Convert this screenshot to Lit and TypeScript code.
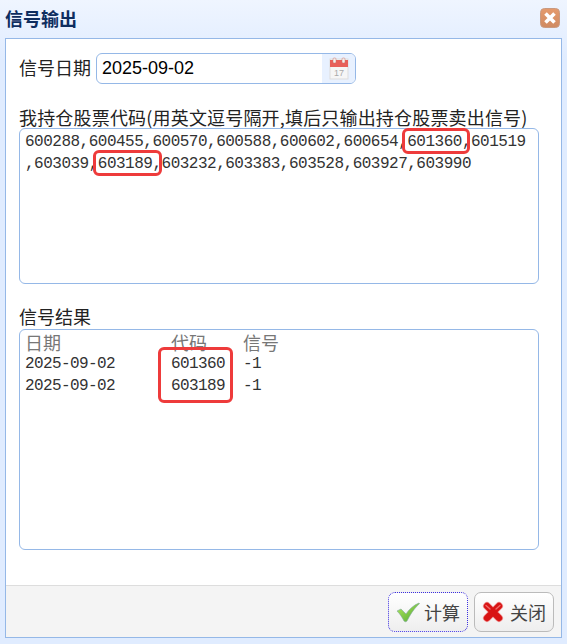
import { LitElement, html, css } from "lit";
import { customElement } from "lit/decorators.js";

const rows = [
  { date: "2025-09-02", code: "601360", signal: "-1" },
  { date: "2025-09-02", code: "603189", signal: "-1" },
];

@customElement("app-root")
export class AppRoot extends LitElement {
  static styles = css`
    :host {
      display: block;
      width: 567px;
      height: 644px;
      font-family: "Noto Sans CJK SC", "Liberation Sans", sans-serif;
      color: #222;
    }
    .window {
      box-sizing: border-box;
      height: 644px;
      display: flex;
      flex-direction: column;
      padding: 0 5px 6px;
      background: linear-gradient(#eff5ff 0, #e0ecff 60px);
    }
    .head {
      height: 38px;
      flex: none;
      display: flex;
      align-items: center;
      justify-content: space-between;
      padding-bottom: 3px;
      box-sizing: border-box;
    }
    .title {
      font-size: 18px;
      font-weight: 700;
      color: #0e2d5f;
      line-height: 24px;
    }
    .close {
      width: 20px;
      height: 20px;
      margin-right: 2px;
      display: block;
    }
    .panel {
      flex: 1;
      min-height: 0;
      display: flex;
      flex-direction: column;
      background: #fff;
      border: 1px solid #95b8e7;
    }
    .content {
      flex: 1;
      padding: 14px 22px 0 13px;
    }
    .date-row {
      display: flex;
      align-items: center;
      gap: 5px;
      height: 31px;
    }
    .label {
      font-size: 18px;
      line-height: 26px;
      color: #222;
      white-space: nowrap;
    }
    .date-row .label {
      padding-bottom: 4px;
    }
    .date-box {
      box-sizing: border-box;
      width: 260px;
      height: 31px;
      display: flex;
      border: 1px solid #95b8e7;
      border-radius: 6px;
      overflow: hidden;
    }
    .date-value {
      flex: 1;
      padding-left: 5px;
      font: 18px/29px "Liberation Sans", sans-serif;
      color: #000;
    }
    .date-btn {
      width: 33px;
      display: flex;
      align-items: center;
      justify-content: center;
      background: #e8f1ff;
    }
    .field-label {
      margin-top: 18px;
      height: 26px;
      line-height: 30px;
      letter-spacing: 0.18px;
    }
    .area {
      position: relative;
      box-sizing: border-box;
      border: 1px solid #95b8e7;
      border-radius: 6px;
      padding: 1px 5px;
      font: 16px/22px "Liberation Mono", monospace;
      letter-spacing: -0.6px;
      color: #333;
      background: #fff;
    }
    .codes {
      height: 156px;
      padding-top: 2px;
      letter-spacing: -0.5px;
      white-space: pre;
    }
    .result-label {
      margin-top: 20px;
      height: 25px;
      line-height: 24px;
    }
    .result {
      height: 221px;
      padding-top: 0;
    }
    .grid {
      display: grid;
      grid-template-columns: 146px 72px auto;
      justify-content: start;
      grid-template-rows: 23px 22px 22px;
      align-items: end;
    }
    .th {
      font: 18px/22px "Noto Sans CJK SC", sans-serif;
      letter-spacing: 0;
      color: #777;
    }
    .mark {
      position: absolute;
      box-sizing: border-box;
      border: 3px solid #ee3b3b;
      border-radius: 6px;
    }
    .foot {
      flex: none;
      height: 52px;
      box-sizing: border-box;
      display: flex;
      justify-content: flex-end;
      align-items: center;
      gap: 6px;
      padding: 0 7px 0 0;
      background: #f4f4f4;
      border-top: 1px solid #ddd;
    }
    .btn {
      box-sizing: border-box;
      width: 80px;
      height: 40px;
      display: flex;
      align-items: center;
      justify-content: center;
      gap: 6px;
      border: 1px solid #bbb;
      border-radius: 7px;
      background: linear-gradient(#fff, #eee);
      font: 18px/24px "Noto Sans CJK SC", sans-serif;
      color: #444;
      padding: 0;
    }
    .btn.focus {
      gap: 4px;
      border: 1px dotted #3c2fe0;
    }
  `;

  render() {
    return html`
      <div class="window">
        <div class="head">
          <span class="title">信号输出</span>
          <svg class="close" viewBox="0 0 20 20">
            <defs>
              <linearGradient id="cl" x1="0" y1="0" x2="0" y2="1">
                <stop offset="0" stop-color="#e59a6c" />
                <stop offset="1" stop-color="#cf8a62" />
              </linearGradient>
            </defs>
            <rect x="0.5" y="0.5" width="19" height="19" rx="4" fill="url(#cl)" stroke="#c99a80" />
            <path d="M5.5 5.5 14.5 14.5M14.5 5.5 5.5 14.5" stroke="#fff" stroke-width="3.6" />
          </svg>
        </div>
        <div class="panel">
          <div class="content">
            <div class="date-row">
              <span class="label">信号日期</span>
              <div class="date-box">
                <div class="date-value">2025-09-02</div>
                <div class="date-btn">
                  <svg width="20" height="23" viewBox="0 0 20 23">
                    <rect x="1" y="2" width="18" height="20" fill="#f6f6f6" stroke="#ddd" />
                    <rect x="1" y="3" width="18" height="7" fill="#e8605a" />
                    <rect x="4" y="1" width="3" height="5" rx="1" fill="#f3f0ec" stroke="#c9716a" stroke-width="0.5" />
                    <rect x="13" y="1" width="3" height="5" rx="1" fill="#f3f0ec" stroke="#c9716a" stroke-width="0.5" />
                    <text x="10" y="19" font-size="9" text-anchor="middle" fill="#aaa" font-family="Liberation Sans">17</text>
                  </svg>
                </div>
              </div>
            </div>
            <div class="label field-label">我持仓股票代码(用英文逗号隔开,填后只输出持仓股票卖出信号)</div>
            <div class="area codes">600288,600455,600570,600588,600602,600654,601360,601519
,603039,603189,603232,603383,603528,603927,603990<span class="mark" style="left:382px;top:-1px;width:68px;height:26px"></span><span class="mark" style="left:73px;top:21px;width:69px;height:26px"></span></div>
            <div class="label result-label">信号结果</div>
            <div class="area result">
              <div class="grid">
                <span class="th">日期</span><span class="th">代码</span><span class="th">信号</span>
                ${rows.map(
                  (r) => html`<span>${r.date}</span><span>${r.code}</span><span>${r.signal}</span>`
                )}
              </div>
              <span class="mark" style="left:138px;top:17px;width:75px;height:56px"></span>
            </div>
          </div>
          <div class="foot">
            <button class="btn focus">
              <svg width="24" height="22" viewBox="0 0 24 22">
                <defs>
                  <linearGradient id="chk" x1="0" y1="0" x2="1" y2="1">
                    <stop offset="0" stop-color="#b4e860" />
                    <stop offset="1" stop-color="#4fa830" />
                  </linearGradient>
                </defs>
                <path d="M1 10 5 8 10 13C13 8 18 4 23 2 24 3 23 3 22 4 17 9 14 14 11 20 10 21 9 21 8 20 6 16 4 13 1 10Z" fill="url(#chk)" stroke="#7fa8a0" stroke-width="0.6" />
              </svg>
              <span>计算</span>
            </button>
            <button class="btn">
              <svg width="22" height="22" viewBox="0 0 22 22">
                <path d="M5 5 17 17M17 5 5 17" stroke="#f0a0a0" stroke-width="8" stroke-linecap="round" />
                <path d="M5 5 17 17M17 5 5 17" stroke="#d81414" stroke-width="6.4" stroke-linecap="round" />
                <path d="M4 4.5 8 8M18 4.5 14 8" stroke="#f06a6a" stroke-width="1.4" stroke-linecap="round" />
              </svg>
              <span>关闭</span>
            </button>
          </div>
        </div>
      </div>
    `;
  }
}
